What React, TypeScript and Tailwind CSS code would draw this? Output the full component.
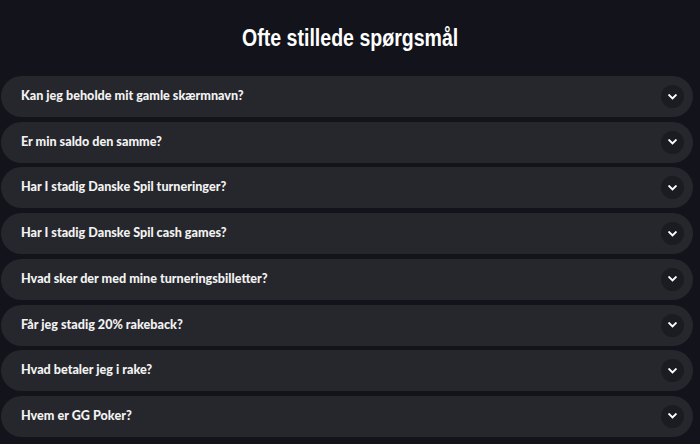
const questions = [
  'Kan jeg beholde mit gamle skærmnavn?',
  'Er min saldo den samme?',
  'Har I stadig Danske Spil turneringer?',
  'Har I stadig Danske Spil cash games?',
  'Hvad sker der med mine turneringsbilletter?',
  'Får jeg stadig 20% rakeback?',
  'Hvad betaler jeg i rake?',
  'Hvem er GG Poker?',
]

const Chevron = () => (
  <svg width="9" height="6" viewBox="0 0 9 6" fill="none">
    <path d="M1.2 1.2 4.5 4.5l3.3-3.3" stroke="white" strokeWidth="1.9" strokeLinecap="square" />
  </svg>
)

export default function App() {
  return (
    <div className="h-[444px] w-[700px] overflow-hidden bg-[#13141b]">
      <div className="flex justify-center pt-[23px]">
        <h1 className="scale-x-[0.85] font-['Liberation_Sans',sans-serif] text-[23px] font-bold leading-[30px] text-white">
          Ofte stillede spørgsmål
        </h1>
      </div>
      <div className="ml-[1px] mt-[23px] flex w-[692px] flex-col gap-[4.71px]">
        {questions.map((q) => (
          <div
            key={q}
            className="flex h-[41px] items-center justify-between rounded-full bg-[#26272c] pl-[20px] pr-[9px]"
          >
            <span className="font-['Lato',sans-serif] text-[12.6px] font-black text-[#f2f2f2]">{q}</span>
            <span className="flex h-[23px] w-[23px] items-center justify-center rounded-full bg-[#1b1c21]">
              <Chevron />
            </span>
          </div>
        ))}
      </div>
    </div>
  )
}
